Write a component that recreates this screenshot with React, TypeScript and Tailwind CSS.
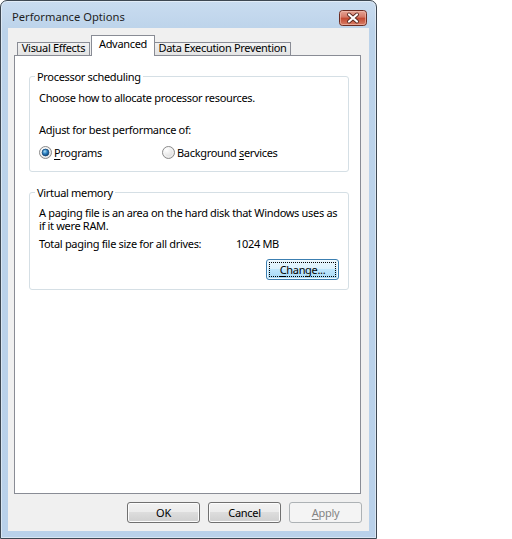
import React from "react";

function Radio({ checked }: { checked: boolean }) {
  return (
    <svg width="13" height="13" viewBox="0 0 13 13" className="shrink-0">
      <defs>
        <radialGradient id={checked ? "rg1" : "rg0"} cx="0.35" cy="0.3" r="0.8">
          <stop offset="0" stopColor="#ffffff" />
          <stop offset="1" stopColor="#d4d4d4" />
        </radialGradient>
        <radialGradient id="dot" cx="0.4" cy="0.35" r="0.7">
          <stop offset="0" stopColor="#a9dcf6" />
          <stop offset="0.5" stopColor="#2a7fc0" />
          <stop offset="1" stopColor="#0d3c6b" />
        </radialGradient>
      </defs>
      <circle cx="6.5" cy="6.5" r="6" fill={`url(#${checked ? "rg1" : "rg0"})`} stroke="#8b8b8b" strokeWidth="1" />
      <circle cx="6.5" cy="6.5" r="4.6" fill="none" stroke="#ffffff" strokeWidth="0.8" opacity="0.7" />
      {checked && <circle cx="6.5" cy="6.5" r="3.4" fill="url(#dot)" stroke="#184a7a" strokeWidth="0.8" />}
    </svg>
  );
}

function CloseButton() {
  return (
    <svg width="28" height="16" viewBox="0 0 28 16">
      <defs>
        <linearGradient id="cb" x1="0" y1="0" x2="0" y2="1">
          <stop offset="0" stopColor="#e7a899" />
          <stop offset="0.45" stopColor="#d47765" />
          <stop offset="0.5" stopColor="#c2472f" />
          <stop offset="1" stopColor="#d8826c" />
        </linearGradient>
      </defs>
      <rect x="0.5" y="0.5" width="27" height="15" rx="3" fill="url(#cb)" stroke="#6b2c22" />
      <rect x="1.5" y="1.5" width="25" height="13" rx="2" fill="none" stroke="#f3c3b5" strokeOpacity="0.6" />
      <path d="M10 4.5 L18 11.5 M18 4.5 L10 11.5" stroke="#5a2a22" strokeWidth="4" strokeLinecap="round" />
      <path d="M10 4.5 L18 11.5 M18 4.5 L10 11.5" stroke="#ffffff" strokeWidth="2.2" strokeLinecap="round" />
    </svg>
  );
}

function Btn({ children, disabled }: { children: React.ReactNode; disabled?: boolean }) {
  return (
    <div
      className={
        disabled
          ? "w-[73px] h-[21px] rounded-[3px] border border-[#adb2b5] bg-[#f4f4f4] text-[#838383] flex items-center justify-center leading-[13px]"
          : "w-[73px] h-[21px] rounded-[3px] border border-[#707070] bg-[linear-gradient(#f2f2f2_0%,#ebebeb_50%,#dddddd_50%,#cfcfcf_100%)] flex items-center justify-center leading-[13px] shadow-[inset_0_0_0_1px_#fcfcfc]"
      }
    >
      {children}
    </div>
  );
}

export default function App() {
  return (
    <div className="w-[512px] h-[539px] bg-white font-['Noto_Sans',sans-serif] text-[11px] text-black">
      <div className="w-[377px] h-[539px] border border-[#3d4752] rounded-t-[7px] bg-[linear-gradient(#c9dcf0_0px,#bcd3ea_30px,#b9d1ea_100%)] flex flex-col shadow-[inset_0_0_0_1px_rgba(255,255,255,0.45)]">
        <div className="h-[27px] flex items-start justify-between pl-[11px] pr-[9px]">
          <div className="mt-[8px] leading-[15px] text-[11.2px] text-[#1e1e1e]">Performance Options</div>
          <div className="mt-[9px] flex">
            <CloseButton />
          </div>
        </div>
        <div className="mx-[7px] h-[503px] bg-[#f0f0f0] flex flex-col tracking-[-0.32px]">
          {/* tabs */}
          <div className="ml-[9px] mt-[7px] h-[20px] flex items-end whitespace-nowrap">
            <div className="w-[73px] h-[13px] border border-b-0 border-[#898c95] bg-[linear-gradient(#f2f2f2,#e3e3e3)] flex items-start justify-center leading-[9px]">
              Visual Effects
            </div>
            <div className="relative z-10 mb-[-1px] ml-[1px] w-[64px] h-[21px] border border-b-0 border-[#898c95] bg-white flex items-start justify-center leading-[13px] pt-[1px]">
              Advanced
            </div>
            <div className="w-[136px] h-[13px] border border-b-0 border-l-0 border-[#898c95] bg-[linear-gradient(#f2f2f2,#e3e3e3)] flex items-start justify-center leading-[9px]">
              Data Execution Prevention
            </div>
          </div>
          {/* panel */}
          <div className="ml-[6px] w-[347px] h-[439px] border border-[#898c95] bg-white flex flex-col">
            <fieldset className="ml-[14px] mt-[14px] w-[320px] min-w-0 h-[102px] border border-[#d5dfe5] rounded-[3px] px-[9px]">
              <legend className="ml-[-4px] px-[2px] leading-[13px]">Processor scheduling</legend>
              <div className="mt-[8px] leading-[13px] whitespace-nowrap">Choose how to allocate processor resources.</div>
              <div className="mt-[19px] leading-[13px] whitespace-nowrap">Adjust for best performance of:</div>
              <div className="mt-[10px] h-[13px] flex items-center">
                <div className="w-[123px] flex items-center gap-[2px]">
                  <Radio checked />
                  <span className="leading-[13px]">
                    <span className="underline underline-offset-[2px]">P</span>rograms
                  </span>
                </div>
                <div className="flex items-center gap-[2px]">
                  <Radio checked={false} />
                  <span className="leading-[13px] whitespace-nowrap">
                    Background <span className="underline underline-offset-[2px]">s</span>ervices
                  </span>
                </div>
              </div>
            </fieldset>
            <fieldset className="ml-[14px] mt-[14px] w-[320px] min-w-0 h-[104px] border border-[#d5dfe5] rounded-[3px] px-[9px]">
              <legend className="ml-[-4px] px-[2px] leading-[13px]">Virtual memory</legend>
              <div className="mt-[7px] leading-[13px] whitespace-nowrap">
                A paging file is an area on the hard disk that Windows uses as
                <br />
                if it were RAM.
              </div>
              <div className="mt-[5px] flex leading-[13px] whitespace-nowrap">
                <span className="w-[197px]">Total paging file size for all drives:</span>
                <span>1024 MB</span>
              </div>
              <div className="mt-[9px] flex justify-end">
                <div className="w-[73px] h-[21px] rounded-[3px] border border-[#3c7fb1] bg-[linear-gradient(#eaf6fd_0%,#d9f0fc_50%,#bee6fd_50%,#a7d9f5_100%)] p-[2px] shadow-[inset_0_0_0_1px_#f0f9fe]">
                  <div className="w-full h-full border border-dotted border-black flex items-center justify-center leading-[13px]">
                    <span>
                      <span className="underline underline-offset-[2px]">C</span>hange...
                    </span>
                  </div>
                </div>
              </div>
            </fieldset>
          </div>
          {/* buttons */}
          <div className="mt-[8px] flex justify-end gap-[8px] pr-[7px]">
            <Btn>OK</Btn>
            <Btn>Cancel</Btn>
            <Btn disabled>
              <span>
                <span className="underline underline-offset-[2px]">A</span>pply
              </span>
            </Btn>
          </div>
        </div>
      </div>
    </div>
  );
}
